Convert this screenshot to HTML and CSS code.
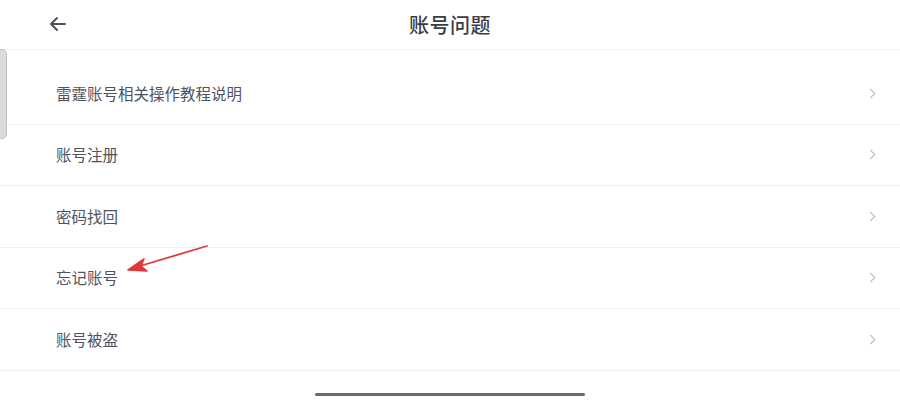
FILE: index.html
```html
<!DOCTYPE html>
<html lang="zh-CN">
<head>
<meta charset="utf-8">
<link rel="stylesheet" href="styles.css">
</head>
<body>
<div class="page">
  <header class="topbar">
    <span class="back">
      <svg width="18" height="16" viewBox="0 0 18 16"><path d="M16 8H2M8 2L2 8l6 6" fill="none" stroke="#4b4f60" stroke-width="2" stroke-linecap="round" stroke-linejoin="round"/></svg>
    </span>
    <h1 class="title">账号问题</h1>
  </header>
  <ul class="list">
    <li class="item"><span>雷霆账号相关操作教程说明</span><i class="chev"></i></li>
    <li class="item"><span>账号注册</span><i class="chev"></i></li>
    <li class="item"><span>密码找回</span><i class="chev"></i></li>
    <li class="item"><span>忘记账号</span><i class="chev"></i></li>
    <li class="item"><span>账号被盗</span><i class="chev"></i></li>
  </ul>
  <div class="sidetab"></div>
  <svg class="annot" width="900" height="405" viewBox="0 0 900 405">
    <path d="M207 246 L140 266" stroke="#e0393a" stroke-width="1.8" stroke-linecap="round"/>
    <path d="M128 270 L144 259 L141 266 L147 271 Z" fill="#e0393a" stroke="#e0393a" stroke-width="1.6" stroke-linejoin="round"/>
  </svg>
  <div class="homebar"></div>
</div>
</body>
</html>
```
FILE: styles.css
```css
* { box-sizing: border-box; }
html, body { margin: 0; padding: 0; background: #fff; }
body { font-family: "Noto Sans CJK SC", "Noto Sans", sans-serif; }
.page { position: relative; width: 900px; height: 405px; overflow: hidden; background: #fff; }
.topbar {
  height: 50px;
  border-bottom: 1px solid #f0f0f0;
  display: flex;
  align-items: center;
  justify-content: center;
  position: relative;
}
.back { position: absolute; left: 49px; top: 16px; display: flex; }
.title { margin: 0; font-size: 20px; font-weight: 500; color: #3a3d48; letter-spacing: 0.5px; }
.list { list-style: none; margin: 0; padding: 13px 0 0 0; }
.item {
  height: 61.5px;
  display: flex;
  align-items: center;
  justify-content: space-between;
  padding: 0 24px 0 56px;
  border-bottom: 1px solid #efefef;
  font-size: 15.5px;
  color: #50535d;
}
.item span { margin-top: -1px; }
.chev {
  width: 7px; height: 7px;
  border-top: 1.3px solid #b5b5b5;
  border-right: 1.3px solid #b5b5b5;
  transform: rotate(45deg);
  margin-right: 2px;
}
.sidetab {
  position: absolute; left: -4px; top: 49px;
  width: 11px; height: 90px;
  background: #d9dcd9;
  border: 1px solid #bfc3bf;
  border-radius: 0 5px 5px 0;
}
.annot { position: absolute; left: 0; top: 0; pointer-events: none; }
.homebar {
  position: absolute; left: 315px; top: 393px;
  width: 270px; height: 3px;
  border-radius: 2px;
  background: #6a6a6a;
}
```
